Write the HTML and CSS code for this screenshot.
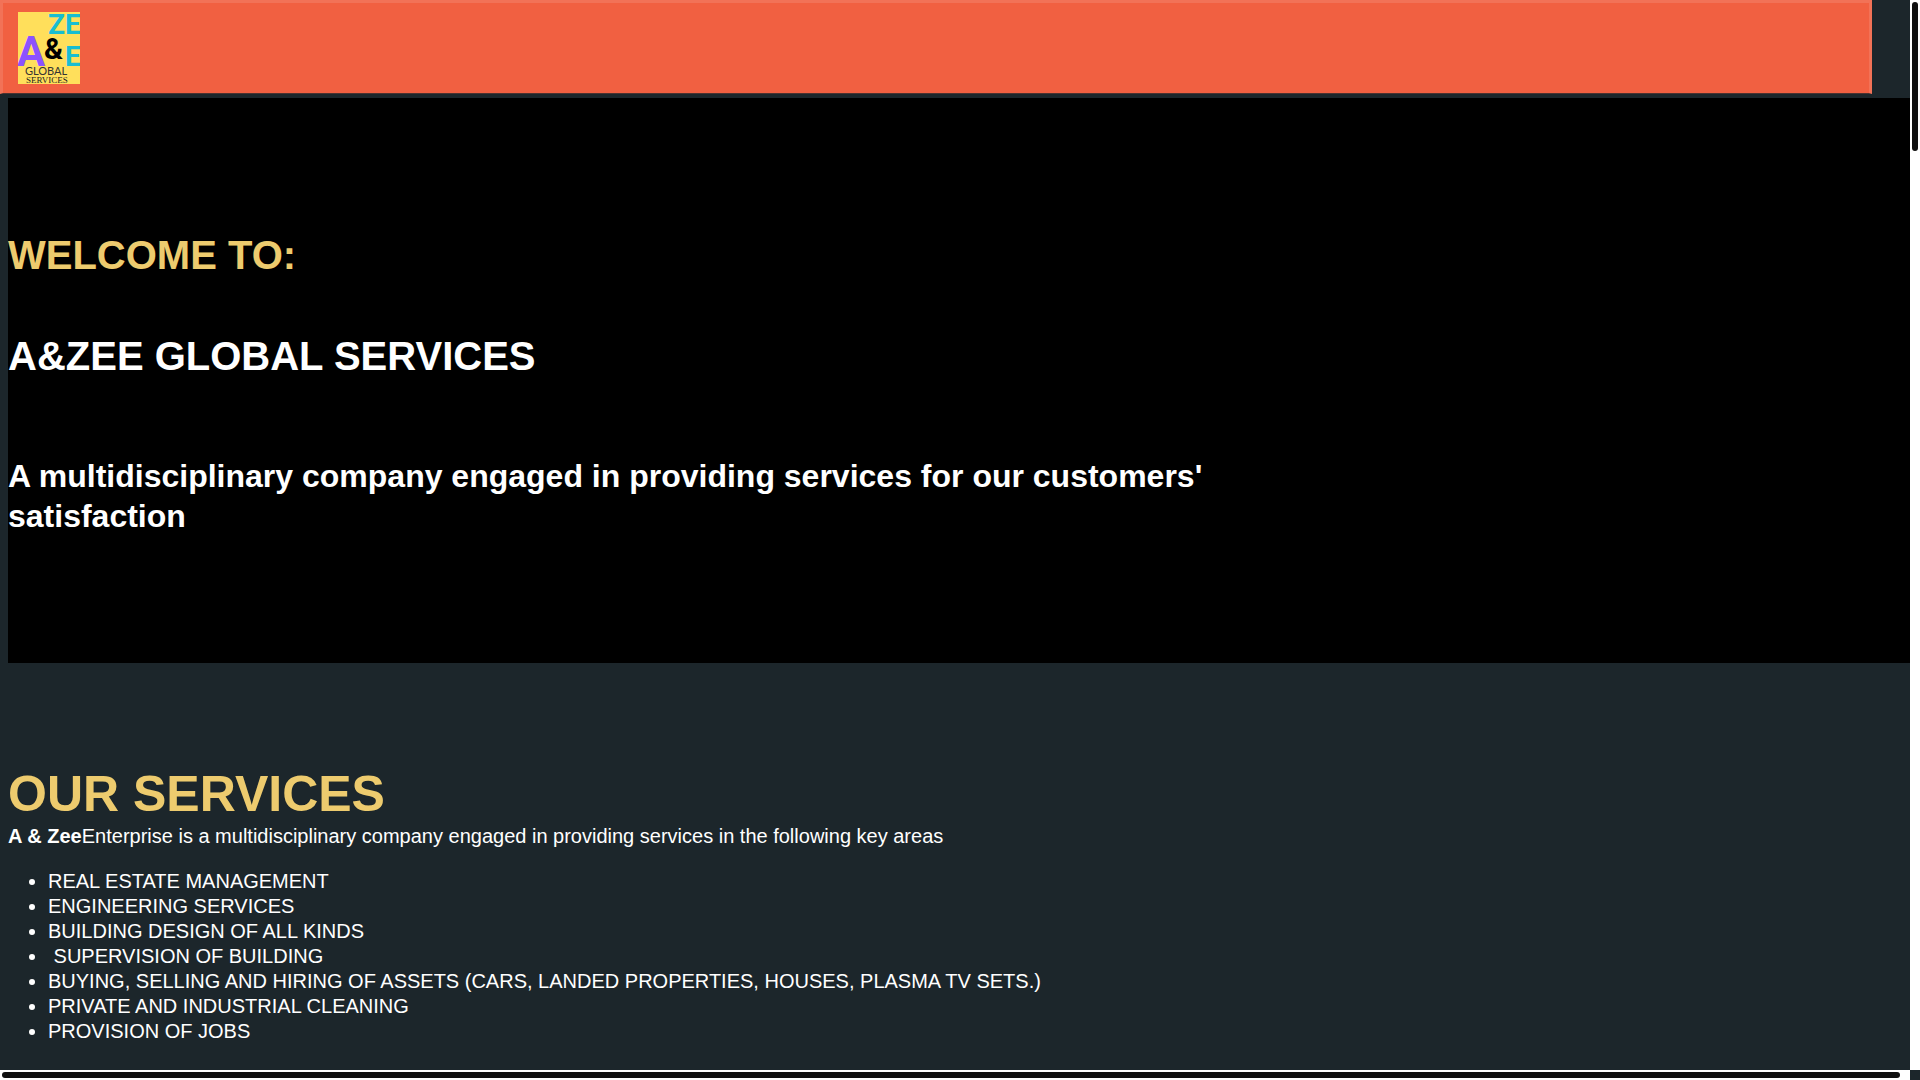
FILE: index.html
```html
<!DOCTYPE html>
<html lang="en">
<head>
    <meta charset="UTF-8">
    <meta name="viewport" content="width=device-width, initial-scale=1.0">
    <title>A&amp;Zee Global Services</title>
    <link rel="stylesheet" href="styles.css">
</head>
<body>
    <div class="page">
        <div class="view">
            <header class="navbar">
                <a href="#home" class="logo" aria-label="A and Zee Global Services">
                    <svg width="62" height="72" viewBox="0 0 62 72">
                        <rect width="62" height="72" fill="#ffdf5b"/>
                        <g class="logo-letters">
                            <text x="30" y="22" font-size="28" fill="#18bdd2">Z</text>
                            <text x="47" y="22" font-size="28" fill="#18bdd2">E</text>
                            <text x="-1" y="54" font-size="42" fill="#8c52ff">A</text>
                            <text x="47" y="54" font-size="28" fill="#18bdd2">E</text>
                            <text x="26" y="47" font-size="29" fill="#000">&amp;</text>
                        </g>
                        <text x="7" y="63" font-size="11" class="logo-global">GLOBAL</text>
                        <text x="8" y="71" font-size="9" class="logo-services">SERVICES</text>
                    </svg>
                </a>
            </header>

            <section class="hero" id="home">
                <h1 class="welcome">WELCOME TO:</h1>
                <h1 class="company">A&amp;ZEE GLOBAL SERVICES</h1>
                <h2 class="tagline">A multidisciplinary company engaged in providing services for our customers' satisfaction</h2>
            </section>

            <section class="services" id="services">
                <h1>OUR SERVICES</h1>
                <p><b>A &amp; Zee</b>Enterprise is a multidisciplinary company engaged in providing services in the following key areas</p>
                <ul>
                    <li>REAL ESTATE MANAGEMENT</li>
                    <li>ENGINEERING SERVICES</li>
                    <li>BUILDING DESIGN OF ALL KINDS</li>
                    <li>&nbsp;SUPERVISION OF BUILDING</li>
                    <li>BUYING, SELLING AND HIRING OF ASSETS (CARS, LANDED PROPERTIES, HOUSES, PLASMA TV SETS.)</li>
                    <li>PRIVATE AND INDUSTRIAL CLEANING</li>
                    <li>PROVISION OF JOBS</li>
                </ul>
            </section>
        </div>

        <!-- scroll tracks -->
        <div class="track track-y"><div class="thumb"></div></div>
        <div class="track track-x"><div class="thumb"></div></div>
    </div>
</body>
</html>
```
FILE: styles.css
```css
* {
    box-sizing: border-box;
}

body {
    margin: 0;
    background-color: #1c262b;
    color: #fff;
    font-family: "Liberation Sans", Arial, sans-serif;
}

h1, h2, p, ul {
    margin: 0;
}

.page {
    display: grid;
    grid-template-columns: 1fr 10px;
    grid-template-rows: 1fr 10px;
    height: 100vh;
}

.view {
    overflow: hidden;
    min-width: 0;
    min-height: 0;
}

/* header */
.navbar {
    width: 98%;
    padding: 9px 15px;
    background-color: #f16041;
    border: 3px solid #f27257;
    border-bottom: 1px solid #4b3331;
}

.logo,
.logo svg {
    display: block;
    width: 62px;
}

.logo-letters {
    font-family: Roboto, "Liberation Sans", sans-serif;
    font-weight: 700;
}

.logo-global {
    font-family: Lato, sans-serif;
    fill: #333;
}

.logo-services {
    font-family: "Liberation Serif", serif;
    fill: #222;
}

/* hero */
.hero {
    margin: 4px 0 0 8px;
    padding: 134px 0 127px;
    background-color: #000;
}

.hero h1 {
    margin-bottom: 55px;
    font-size: 40px;
    line-height: 46px;
}

.hero .welcome {
    color: #edcb6e;
}

.hero .company {
    margin-bottom: 77px;
}

.tagline {
    max-width: 68%;
    font-size: 32px;
    line-height: 40px;
}

/* services */
.services {
    padding: 101px 0 0 8px;
    font-size: 20px;
    line-height: 25px;
}

.services h1 {
    color: #edcb6e;
    font-size: 50px;
    line-height: 60px;
}

.services ul {
    margin-top: 20px;
    padding-left: 40px;
}

/* scroll tracks */
.track {
    padding: 2px;
    background-color: #fff;
}

.thumb {
    background-color: #0f0f0f;
    border-radius: 3px;
}

.track-y .thumb {
    width: 6px;
    height: 14%;
}

.track-x .thumb {
    width: calc(100% - 8px);
    height: 6px;
}
```
